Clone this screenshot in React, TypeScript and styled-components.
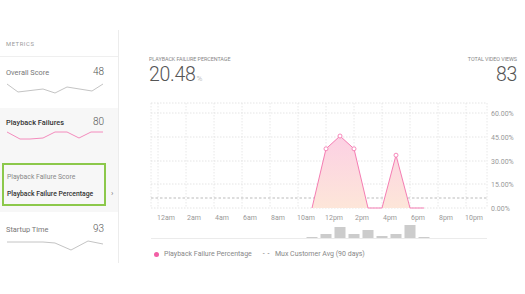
import styled, { createGlobalStyle } from 'styled-components'

const GlobalStyle = createGlobalStyle`
  html, body {
    margin: 0;
    padding: 0;
    background: #ffffff;
  }
  body {
    font-family: Roboto, 'Liberation Sans', sans-serif;
    color: #555;
  }
`

type Pt = [number, number]

interface SparkProps {
  points: Pt[]
  color: string
}

const Sparkline = ({ points, color }: SparkProps) => (
  <SparkSvg width="98" height="14" viewBox="0 0 98 14">
    <polyline points={points.map((p) => p.join(',')).join(' ')} fill="none" stroke={color} strokeWidth="1" />
  </SparkSvg>
)

const HOURS = ['12am', '2am', '4am', '6am', '8am', '10am', '12pm', '2pm', '4pm', '6pm', '8pm', '10pm']
const Y_TICKS: [string, number][] = [
  ['60.00%', 113],
  ['45.00%', 137],
  ['30.00%', 161],
  ['15.00%', 184],
  ['0.00%', 208],
]

// hourly data from 10am to 6pm
const hourX = (h: number) => 172 + h * 14
const failures = [0, 37, 45, 37, 0, 0, 33, 0, 0]
const views = [1, 4, 11, 4, 8, 2, 4, 13, 1]
const valY = (v: number) => 208 - v * 1.6

const Chart = () => {
  const pts = failures.map((v, i) => [hourX(10 + i), valY(v)] as Pt)
  const line = pts.map((p) => p.join(',')).join(' ')
  const area = `M${pts[0][0]},208 L${line.replace(/ /g, ' L')} L${pts[pts.length - 1][0]},208 Z`
  const vLines = [151, ...Array.from({ length: 12 }, (_, k) => 158 + k * 28), 487]

  return (
    <ChartSvg width="376" height="145" viewBox="149 100 376 145">
      <defs>
        <linearGradient id="fillGrad" x1="0" y1="0" x2="0" y2="1">
          <stop offset="0%" stopColor="#fcd0e4" />
          <stop offset="100%" stopColor="#fde6d9" />
        </linearGradient>
      </defs>
      {[103, 113, 137, 161, 184, 208].map((y) => (
        <line key={y} x1="151" x2="487" y1={y} y2={y} stroke="#dedede" strokeWidth="0.8" strokeDasharray="1.5 1.5" />
      ))}
      {vLines.map((x) => (
        <line key={x} x1={x} x2={x} y1="103" y2="208" stroke="#e2e2e2" strokeWidth="0.8" strokeDasharray="1.5 1.5" />
      ))}
      <line x1="151" x2="487" y1="198" y2="198" stroke="#aaa" strokeWidth="0.8" strokeDasharray="2.5 2" />
      <path d={area} fill="url(#fillGrad)" />
      <polyline points={line} fill="none" stroke="#f57db3" strokeWidth="1" />
      {pts
        .filter((p) => p[1] < 208)
        .map((p) => (
          <circle key={p[0]} cx={p[0]} cy={p[1]} r="2" fill="#fff" stroke="#f57db3" strokeWidth="0.9" />
        ))}
      {Y_TICKS.map(([label, y]) => (
        <AxisText key={label} x="491" y={y + 2.5}>
          {label}
        </AxisText>
      ))}
      {HOURS.map((h, i) => (
        <AxisText key={h} x={166 + i * 28} y="219.5" textAnchor="middle">
          {h}
        </AxisText>
      ))}
      <line x1="151" x2="487" y1="238.5" y2="238.5" stroke="#ebebeb" strokeWidth="1" />
      {views.map((v, i) => (
        <rect key={i} x={hourX(10 + i) - 5.5} y={238 - v} width="11" height={v} fill="#cccccc" />
      ))}
    </ChartSvg>
  )
}

const App = () => {
  return (
    <>
      <GlobalStyle />
      <Page>
        <Sidebar>
          <SidebarHead>METRICS</SidebarHead>
          <MetricItem>
            <MetricRow>
              <MetricName>Overall Score</MetricName>
              <MetricValue>48</MetricValue>
            </MetricRow>
            <Sparkline color="#c4c4c4" points={[[1, 3], [12, 11], [37, 8], [49, 12], [61, 6], [86, 10], [97, 3]]} />
          </MetricItem>
          <ActiveGroup>
            <MetricItem compact>
              <MetricRow>
                <MetricName strong>Playback Failures</MetricName>
                <MetricValue>80</MetricValue>
              </MetricRow>
              <Sparkline
                color="#f48cbd"
                points={[[1, 3], [14, 10], [24, 10], [37, 9], [49, 3], [61, 3], [73, 9], [85, 3], [97, 3]]}
              />
            </MetricItem>
            <SubList>
              <SubBox>
                <SubItem>Playback Failure Score</SubItem>
                <SubItem selected>Playback Failure Percentage</SubItem>
              </SubBox>
              <Chevron>›</Chevron>
            </SubList>
          </ActiveGroup>
          <MetricItem last>
            <MetricRow>
              <MetricName>Startup Time</MetricName>
              <MetricValue>93</MetricValue>
            </MetricRow>
            <Sparkline color="#c4c4c4" points={[[1, 4], [11, 4], [37, 4], [49, 5], [65, 12], [82, 3], [97, 6]]} />
          </MetricItem>
        </Sidebar>
        <Main>
          <Header>
            <Stat>
              <StatLabel>PLAYBACK FAILURE PERCENTAGE</StatLabel>
              <StatValue>
                20.48<Unit>%</Unit>
              </StatValue>
            </Stat>
            <Stat alignRight>
              <StatLabel>TOTAL VIDEO VIEWS</StatLabel>
              <StatValue>83</StatValue>
            </Stat>
          </Header>
          <Chart />
          <Legend>
            <LegendItem>
              <Dot />
              Playback Failure Percentage
            </LegendItem>
            <LegendItem>
              <Dash>- -</Dash>
              Mux Customer Avg (90 days)
            </LegendItem>
          </Legend>
        </Main>
      </Page>
    </>
  )
}

export default App

const Page = styled.div`
  display: flex;
  width: 525px;
  height: 294px;
  overflow: hidden;
`

const Sidebar = styled.aside`
  width: 118px;
  height: 233px;
  margin-top: 30px;
  border-right: 1px solid #ececec;
  display: flex;
  flex-direction: column;
  flex-shrink: 0;
`

const SidebarHead = styled.div`
  box-sizing: border-box;
  height: 27px;
  border-bottom: 1px solid #efefef;
  padding: 1px 0 0 6px;
  font-size: 5.8px;
  letter-spacing: 0.6px;
  color: #999;
  display: flex;
  align-items: center;
`

const MetricItem = styled.div<{ compact?: boolean; last?: boolean }>`
  padding: ${(p) => (p.compact ? '8px 14px 6px 6px' : p.last ? '11px 14px 8px 6px' : '9px 14px 13px 6px')};
  display: flex;
  flex-direction: column;
  gap: ${(p) => (p.compact ? '2px' : '4px')};
`

const MetricRow = styled.div`
  display: flex;
  justify-content: space-between;
  align-items: baseline;
`

const MetricName = styled.span<{ strong?: boolean }>`
  font-size: 7.4px;
  color: ${(p) => (p.strong ? '#333' : '#777')};
  font-weight: ${(p) => (p.strong ? 500 : 400)};
`

const MetricValue = styled.span`
  font-size: 10px;
  font-weight: 300;
  color: #555;
`

const SparkSvg = styled.svg`
  display: block;
`

const ActiveGroup = styled.div`
  background: #f7f7f7;
`

const SubList = styled.div`
  display: flex;
  align-items: center;
  padding: 10px 0 6px 2px;
  margin-top: 4px;
`

const SubBox = styled.div`
  width: 104px;
  height: 43px;
  box-sizing: border-box;
  border: 2px solid #8cc84b;
  padding: 8px 0 0 3px;
  display: flex;
  flex-direction: column;
  gap: 8px;
`

const SubItem = styled.div<{ selected?: boolean }>`
  font-size: 6.8px;
  line-height: 9px;
  white-space: nowrap;
  color: ${(p) => (p.selected ? '#333' : '#888')};
  font-weight: ${(p) => (p.selected ? 500 : 400)};
`

const Chevron = styled.span`
  font-size: 8px;
  color: #777;
  margin: 18px 0 0 5px;
`

const Main = styled.main`
  flex: 1;
  padding-top: 56px;
  padding-left: 30px;
  display: flex;
  flex-direction: column;
`

const Header = styled.div`
  display: flex;
  justify-content: space-between;
  padding-right: 8px;
  margin-bottom: 11px;
`

const Stat = styled.div<{ alignRight?: boolean }>`
  display: flex;
  flex-direction: column;
  align-items: ${(p) => (p.alignRight ? 'flex-end' : 'flex-start')};
`

const StatLabel = styled.div`
  font-size: 5.4px;
  line-height: 7px;
  color: #888;
  letter-spacing: -0.05px;
`

const StatValue = styled.div`
  margin-top: 2px;
  font-size: 19.5px;
  line-height: 20px;
  font-weight: 300;
  color: #555;
  letter-spacing: -0.3px;
`

const Unit = styled.span`
  font-size: 8px;
  color: #aaa;
  margin-left: 1px;
`

const ChartSvg = styled.svg`
  display: block;
`

const AxisText = styled.text`
  font-family: Roboto, 'Liberation Sans', sans-serif;
  font-size: 7px;
  fill: #999;
`

const Legend = styled.div`
  display: flex;
  gap: 11px;
  margin-top: 4px;
  padding-left: 5px;
  font-size: 7px;
  line-height: 10px;
  color: #888;
`

const LegendItem = styled.div`
  display: flex;
  align-items: center;
  gap: 5px;
`

const Dot = styled.span`
  width: 5px;
  height: 5px;
  border-radius: 50%;
  background: #f25ea5;
`

const Dash = styled.span`
  color: #777;
  letter-spacing: 0.5px;
`
